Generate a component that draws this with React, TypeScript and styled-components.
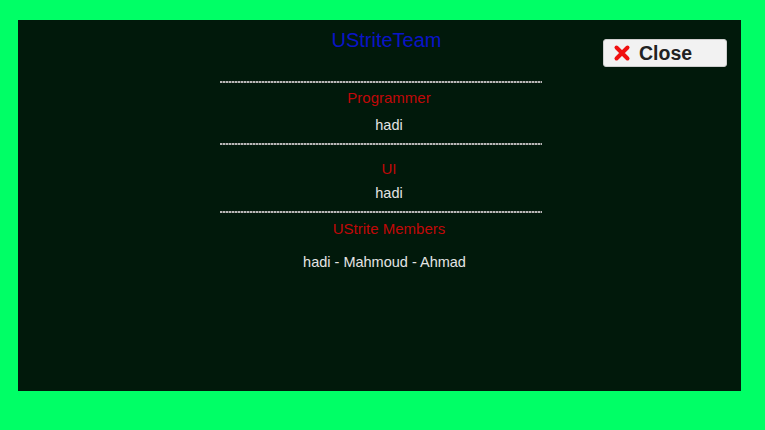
import * as React from 'react'
import styled, { createGlobalStyle } from 'styled-components'

const GlobalStyle = createGlobalStyle`
  html, body {
    margin: 0;
    padding: 0;
    background: #00ff66;
    font-family: "Liberation Sans", Arial, sans-serif;
  }
`

interface Role {
  title: string,
  names: string,
  labelTop: number,
  valueTop: number,
  shift: number
}

const roles: Array<Role> = [
  { title: 'Programmer', names: 'hadi', labelTop: 6, valueTop: 9, shift: 16 },
  { title: 'UI', names: 'hadi', labelTop: 15, valueTop: 6, shift: 16 },
  { title: 'UStrite Members', names: 'hadi - Mahmoud - Ahmad', labelTop: 7, valueTop: 15, shift: 7 }
]

const CloseIcon = () => (
  <svg width='18' height='18' viewBox='0 0 18 18'>
    <path d='M3.5 3.5 L14.5 14.5 M14.5 3.5 L3.5 14.5' stroke='#f01010' strokeWidth='4' strokeLinecap='round' />
  </svg>
)

export default function App() {
  return (
    <Page>
      <GlobalStyle />
      <Panel>
        <CloseButton type='button'>
          <CloseIcon />
          <span>Close</span>
        </CloseButton>
        <Title>UStriteTeam</Title>
        <Column>
          {roles.map((role, i) => (
            <React.Fragment key={ role.title }>
              <Divider $top={ i === 0 ? 29 : 9 } />
              <Label $top={ role.labelTop }>{ role.title }</Label>
              <Value $top={ role.valueTop } $shift={ role.shift }>{ role.names }</Value>
            </React.Fragment>
          ))}
        </Column>
      </Panel>
    </Page>
  )
}

const Page = styled.div`
  padding: 20px 0 0 18px;
  height: 430px;
  box-sizing: border-box;
`

const Panel = styled.div`
  position: relative;
  width: 723px;
  height: 371px;
  background: #01190b;
  padding: 8px 0 0 3px;
  box-sizing: border-box;
  display: flex;
  flex-direction: column;
  align-items: center;
`

const Title = styled.div`
  font-size: 20px;
  line-height: 24px;
  color: #0a14c8;
  margin-left: 11px;
`

const Column = styled.div`
  width: 322px;
  display: flex;
  flex-direction: column;
  align-items: center;
`

const Divider = styled.div<{ $top: number }>`
  width: 100%;
  height: 2px;
  margin-top: ${ p => p.$top }px;
  background: repeating-linear-gradient(90deg, #b8b8b8 0 2px, #5a5f5a 2px 3px);
`

const Label = styled.div<{ $top: number }>`
  font-size: 15px;
  line-height: 18px;
  color: #c00808;
  margin-top: ${ p => p.$top }px;
  padding-left: 16px;
`

const Value = styled.div<{ $top: number, $shift: number }>`
  font-size: 14.5px;
  line-height: 18px;
  color: #e4e4e4;
  margin-top: ${ p => p.$top }px;
  padding-left: ${ p => p.$shift }px;
`

const CloseButton = styled.button`
  position: absolute;
  top: 19px;
  right: 14px;
  width: 124px;
  height: 28px;
  box-sizing: border-box;
  display: flex;
  align-items: center;
  gap: 8px;
  padding: 0 0 0 9px;
  background: #f2f2f2;
  border: 1px solid #cfcfcf;
  border-radius: 3px;
  font-family: "Liberation Sans", Arial, sans-serif;
  font-weight: bold;
  font-size: 19.5px;
  color: #222;
  cursor: pointer;
`
